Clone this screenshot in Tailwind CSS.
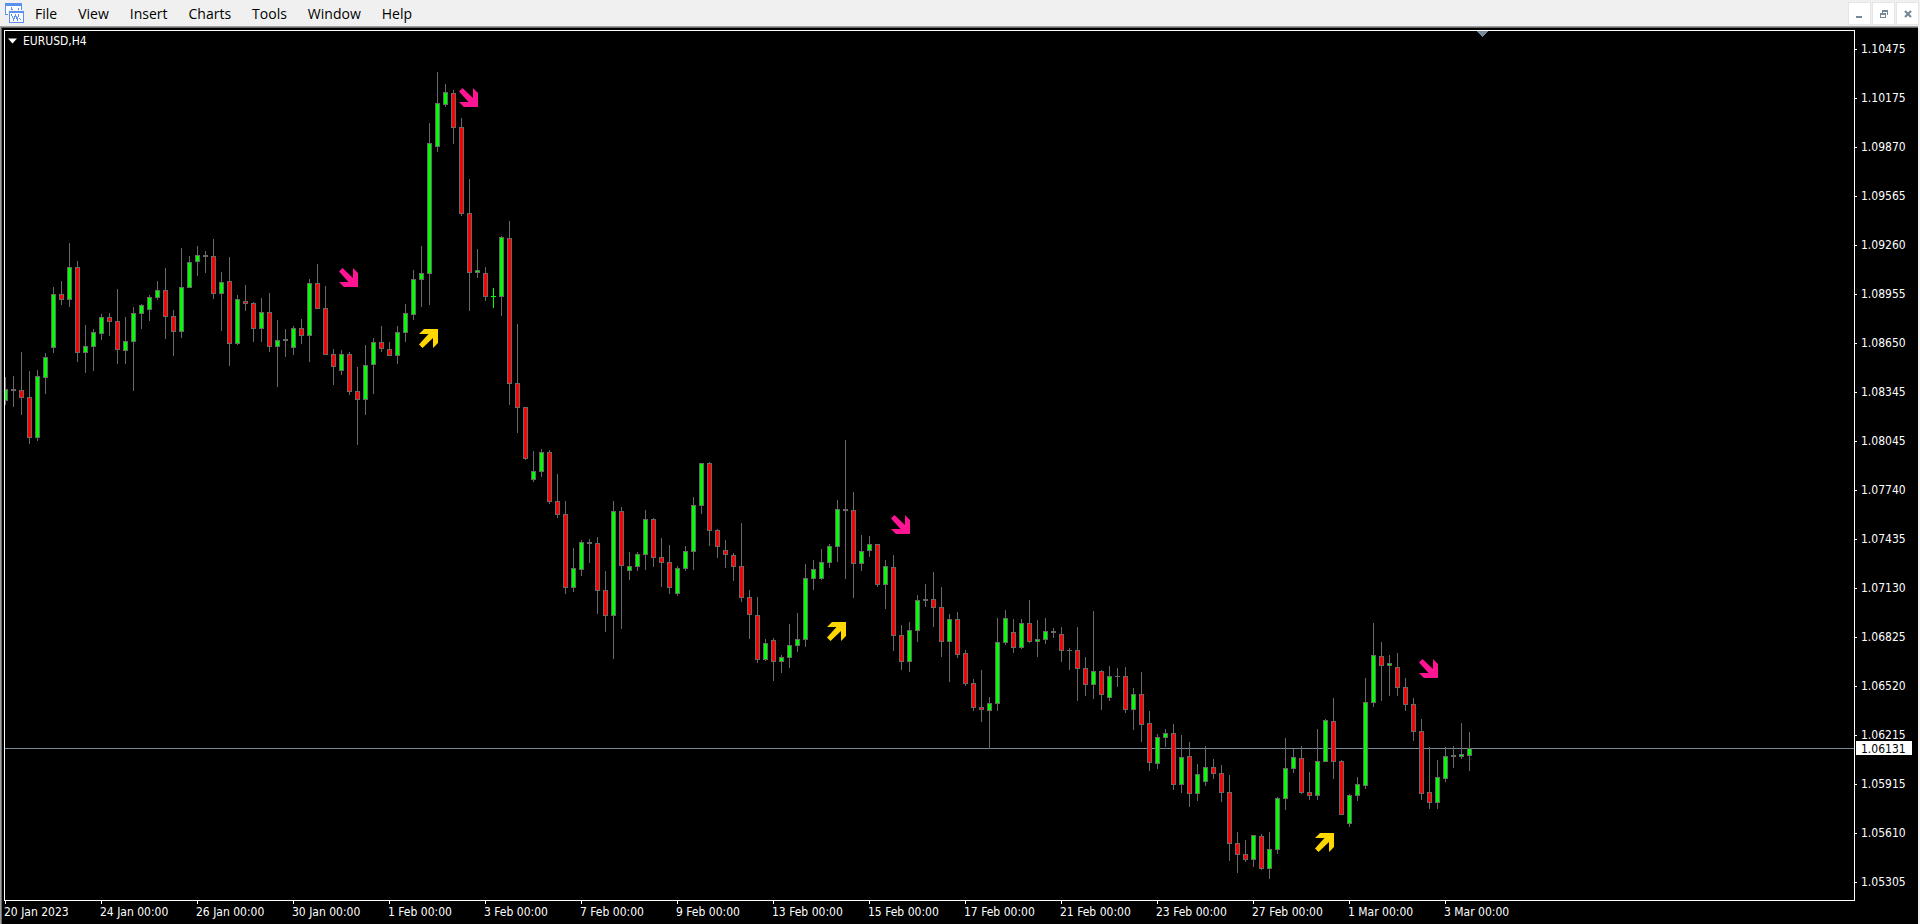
<!DOCTYPE html>
<html lang="en">
<head>
    <meta charset="UTF-8">
    <meta name="viewport" content="width=device-width, initial-scale=1.0">
    <title>EURUSD,H4</title>
    <script src="https://cdn.jsdelivr.net/npm/@tailwindcss/browser@4"></script>
</head>
<body class="bg-[#f0f0f0] h-screen flex flex-col overflow-hidden">

    <!-- Menu bar -->
    <header class="h-[26px] shrink-0 flex items-center justify-between pt-px pl-1 pr-[2px] font-['Open_Sans',sans-serif] text-[14px] leading-5 text-black">
        <nav class="flex items-center gap-[21px]">
            <div class="flex items-center gap-[10px]">
                <svg class="w-[21px] h-[21px]" viewBox="0 0 21 21" shape-rendering="crispEdges">
                    <rect x="1" y="0" width="17" height="12" fill="#5b8ff0"/>
                    <rect x="2" y="3" width="15" height="8" fill="#fff"/>
                    <path d="M4 7h1v2h-1zM7 4h1v4h-1zM8 6h1v1h-1zM11 7h2v1h-2zM14 5h1v3h-1z" fill="#5b8ff0"/>
                    <rect x="4" y="7" width="17" height="13" fill="#f0f0f0"/>
                    <rect x="5" y="8" width="15" height="12" fill="#5b8ff0"/>
                    <rect x="6" y="10" width="13" height="9" fill="#fff"/>
                    <path d="M7.500 11.500l2 5 2-4 2 4 1-5M15.500 15.500l2 2" stroke="#5b8ff0" fill="none"/>
                </svg>
                <button>File</button>
            </div>
            <button>View</button>
            <button>Insert</button>
            <button>Charts</button>
            <button>Tools</button>
            <button>Window</button>
            <button>Help</button>
        </nav>
        <div class="flex gap-[3px]">
            <button aria-label="Minimize" class="w-[21px] h-[21px] bg-white outline outline-[#e6e6e6]">
                <svg class="w-[21px] h-[21px]" viewBox="0 0 21 21" fill="#778899"><rect x="7" y="13" width="6" height="2"/></svg>
            </button>
            <button aria-label="Restore" class="w-[21px] h-[21px] bg-white outline outline-[#e6e6e6]">
                <svg class="w-[21px] h-[21px]" viewBox="0 0 21 21" fill="#778899" shape-rendering="crispEdges">
                    <path d="M9 7h6v5h-1v-3h-4v1h-1z"/>
                    <path fill-rule="evenodd" d="M7 10h6v5h-6zM8 12v2h4v-2z"/>
                </svg>
            </button>
            <button aria-label="Close" class="w-[21px] h-[21px] bg-white outline outline-[#e6e6e6]">
                <svg class="w-[21px] h-[21px]" viewBox="0 0 21 21"><path d="M8 8l6 6M14 8l-6 6" stroke="#778899" stroke-width="2.200"/></svg>
            </button>
        </div>
    </header>

    <!-- Chart window -->
    <main class="flex-1 min-h-0 flex border-t border-l border-[#a0a0a0] mr-[2px]">
        <div class="flex-1 min-w-0 border-t border-l border-[#696969] bg-black text-white pt-[2px] pl-[2px] grid grid-cols-[1fr_63px] grid-rows-[1fr_23px] font-['DejaVu_Sans_Condensed','Noto_Sans',sans-serif] text-[12px] leading-4">

            <section class="relative border border-white overflow-hidden">
                <svg id="chart" class="absolute inset-0 w-full h-full" shape-rendering="crispEdges"></svg>
                <button class="relative flex items-center gap-[6px] pl-[3px] pt-[2px]">
                    <svg class="w-[9px] h-[6px]" viewBox="0 0 9 6"><path d="M0 0.500h9L4.500 5.500z" fill="#fff"/></svg>
                    EURUSD,H4
                </button>
            </section>

            <!-- Price scale -->
            <aside class="relative">
                <ul id="prices" class="flex flex-col gap-[33px] pt-[11px]"></ul>
                <div class="absolute top-[711px] left-[1px] w-14 h-[14px] bg-white text-black pl-[5px] leading-4">1.06131</div>
            </aside>

            <!-- Time scale -->
            <ul id="times" class="col-span-2 flex overflow-hidden"></ul>
        </div>
    </main>

    <script>
        const prices = ["1.10475", "1.10175", "1.09870", "1.09565", "1.09260", "1.08955", "1.08650", "1.08345", "1.08045",
            "1.07740", "1.07435", "1.07130", "1.06825", "1.06520", "1.06215", "1.05915", "1.05610", "1.05305"];
        const times = ["20 Jan 2023", "24 Jan 00:00", "26 Jan 00:00", "30 Jan 00:00", "1 Feb 00:00", "3 Feb 00:00",
            "7 Feb 00:00", "9 Feb 00:00", "13 Feb 00:00", "15 Feb 00:00", "17 Feb 00:00", "21 Feb 00:00",
            "23 Feb 00:00", "27 Feb 00:00", "1 Mar 00:00", "3 Mar 00:00"];

        // direction, high, body top, body bottom, low
        const candles = `
            G 377 389 401 405|D 376 389 391 407|R 352 390 398 415|R 371 397 438 444|G 370 376 438 441|G 353 357 378 394
            G 287 294 348 353|R 281 294 300 305|G 243 267 300 307|R 261 267 353 362|G 325 346 353 373|G 329 332 347 371
            G 314 317 334 340|R 313 317 322 336|R 289 321 350 364|G 317 341 351 364|G 307 313 342 391|G 304 305 314 329
            G 295 297 310 321|G 281 290 298 300|R 268 290 317 339|R 310 316 332 356|G 248 287 332 338|G 256 262 288 288
            G 246 255 262 276|D 251 255 257 273|R 239 256 294 299|G 272 282 294 331|R 257 281 344 366|G 295 299 344 345
            R 285 301 304 311|R 302 303 329 342|G 298 312 329 342|R 293 312 347 352|G 320 340 347 387|D 329 339 341 357
            G 326 328 348 355|R 319 328 336 344|G 279 283 336 362|R 264 283 309 309|R 286 308 355 355|R 349 354 367 385
            G 350 354 371 375|R 352 354 392 395|R 367 391 400 445|G 345 365 400 415|G 338 342 365 394|R 326 342 349 352
            R 342 349 356 356|G 326 332 356 364|G 304 313 333 342|G 270 279 315 320|G 246 273 280 307|G 123 143 274 305
            G 72 103 147 152|G 84 92 105 107|R 90 93 128 144|R 118 127 214 216|R 179 213 273 311|G 249 270 273 278
            R 267 273 297 301|L 288 296 297 308|G 236 237 297 316|R 221 238 384 405|R 324 383 408 433|R 407 407 459 460
            G 451 471 480 482|G 449 452 472 477|R 450 452 502 504|R 474 501 515 518|R 501 514 588 594|G 548 568 588 592
            G 540 542 570 576|D 539 542 544 563|R 537 543 591 614|R 571 590 616 632|G 501 511 616 659|R 507 511 566 629
            G 552 566 571 580|G 552 554 567 571|G 510 519 555 570|R 518 519 558 567|R 538 557 563 587|R 545 562 588 594
            G 566 568 594 596|G 546 551 569 571|G 497 505 552 570|G 463 463 506 514|R 462 463 531 546|R 529 530 547 558
            R 540 550 555 568|R 553 555 567 581|R 523 566 598 602|R 590 597 615 639|R 597 615 660 663|G 639 643 660 661
            R 638 640 662 681|G 655 657 662 673|G 624 645 658 668|G 613 639 646 652|G 564 578 640 647|G 560 569 579 590
            G 549 562 579 580|G 544 546 563 568|G 500 509 547 562|D 440 509 511 579|R 492 510 564 598|G 535 551 564 571
            G 536 544 551 557|R 544 544 585 587|G 560 566 585 609|R 555 567 636 651|R 625 635 662 670|G 622 630 662 672
            G 595 600 631 642|D 584 599 601 607|R 572 599 608 627|R 587 607 642 657|G 614 619 642 682|R 612 619 655 658
            R 650 653 684 686|R 679 683 708 711|R 670 707 710 722|G 697 703 711 749|G 618 642 704 711|G 610 618 643 645
            R 619 632 648 653|G 619 623 648 649|R 600 623 642 643|G 620 639 642 657|G 618 631 640 644|D 628 631 633 638
            R 627 634 651 662|D 648 650 651 670|R 627 650 669 701|R 657 668 685 696|G 611 671 685 699|R 670 671 695 710
            G 666 676 698 701|D 668 676 677 687|R 667 676 710 713|G 688 694 710 730|R 672 694 725 742|R 711 723 763 771
            G 734 737 764 769|G 729 733 738 747|R 724 733 785 790|G 735 757 785 793|R 742 756 794 807|G 764 774 794 801
            G 746 767 782 786|R 759 767 774 779|R 765 773 793 802|R 775 792 844 861|R 832 843 855 873|R 840 854 860 862
            G 835 835 860 867|R 834 836 869 870|G 832 849 869 879|G 797 798 850 854|G 738 768 799 810|G 749 757 769 773
            R 746 758 793 794|R 772 792 796 800|G 729 761 796 800|G 719 720 762 762|R 698 721 762 779|R 760 761 815 815
            G 794 795 824 827|G 777 784 796 801|G 678 702 786 789|G 623 655 703 707|R 642 656 666 701|G 655 663 666 696
            R 653 667 688 696|R 678 687 705 711|R 698 704 732 741|R 719 731 794 800|R 747 792 803 809|G 760 777 803 809
            G 747 756 779 782|D 746 755 757 768|G 723 754 757 759|G 732 748 756 771`.trim().split(/[|\n]/);

        const sells = [[339, 268], [459, 88], [891, 515], [1419, 659]];
        const buys = [[419, 329], [827, 622], [1315, 833]];

        // Scales
        document.getElementById("prices").innerHTML = prices.map(p =>
            `<li class="flex items-center gap-1"><span class="w-[2px] h-px bg-white"></span>${p}</li>`).join("");
        document.getElementById("times").innerHTML = times.map(t =>
            `<li class="w-24 shrink-0 whitespace-nowrap"><span class="block w-px h-[3px] ml-[1px] bg-white"></span>${t}</li>`).join("");

        // Candles, on the window's own pixel grid
        const rect = (x, y, w, h, fill) => `<rect x="${x}" y="${y}" width="${w}" height="${h}" fill="${fill}"/>`;
        const fills = { G: "#00ff00", R: "#ff0000" };
        let out = `<rect x="5" y="748" width="100%" height="1" fill="#778899"/>`;
        candles.forEach((row, i) => {
            const [dir, ...v] = row.trim().split(" ");
            const [high, top, bottom, low] = v.map(Number);
            const x = 5 + i * 8;
            const edge = dir === "L" ? "#00ff00" : "#696969";
            out += rect(x, high, 1, low - high, edge) + rect(x - 2, top, 5, bottom - top, edge);
            if (fills[dir]) out += rect(x - 1, top + 1, 3, bottom - top - 2, fills[dir]);
        });

        // Signal arrows
        sells.forEach(([x, y]) => {
            out += `<path transform="translate(${x} ${y})" d="M5 19H19V5L14 0V10L3.500 0L0 3.500L9.500 14H0z" fill="#ff1493" shape-rendering="auto"/>`;
        });
        buys.forEach(([x, y]) => {
            out += `<path transform="translate(${x} ${y})" d="M5 0H19V14L14 19V9L3.500 19L0 15.500L9.500 5H0z" fill="#ffd700" shape-rendering="auto"/>`;
        });
        out += `<path d="M1477 31h11l-5.500 6z" fill="#778899"/>`;
        document.getElementById("chart").innerHTML = `<g transform="translate(-5 -31)">${out}</g>`;
    </script>

</body>
</html>
